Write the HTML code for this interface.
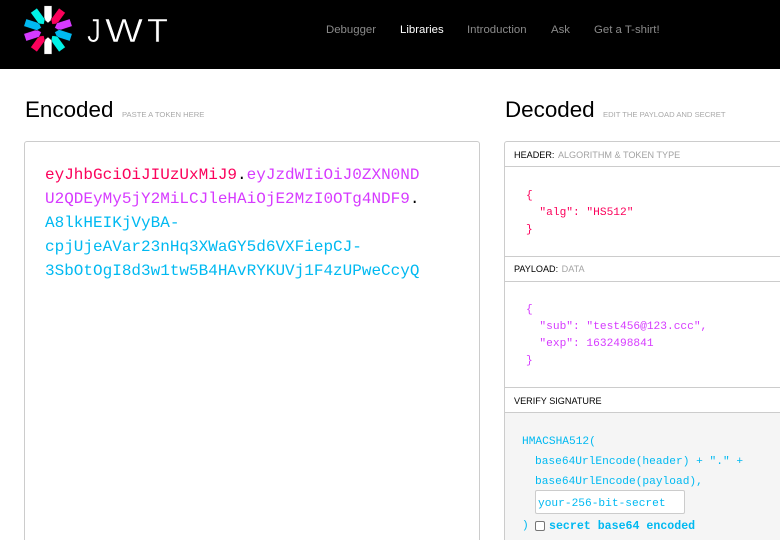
<!DOCTYPE html>
<html lang="en">
<head>
<meta charset="utf-8">
<title>JWT</title>
<style>
html,body{margin:0;padding:0;background:#fff;}
#p{position:relative;width:780px;height:540px;overflow:hidden;background:#fff;font-family:"Liberation Sans",sans-serif;}
#p div,#p a{position:absolute;white-space:pre;}
.nav{top:23px;font-size:11.4px;line-height:14px;color:#8a8a8a;text-decoration:none;}
.h{top:97px;font-size:22.4px;line-height:26px;color:#000;}
.sub{top:110px;font-size:7.65px;line-height:10px;color:#a9a9a9;}
.tok{left:45px;font-size:16px;line-height:24px;font-family:"Liberation Mono",monospace;}
.line{left:505px;width:275px;height:1px;background:#ccc;}
.lab{left:514px;font-size:9.1px;line-height:12px;color:#000;}
.lab span{color:#a3a3a3;margin-left:3.5px;}
.c{font-family:"Liberation Mono",monospace;font-size:11.2px;line-height:17px;}
.pk{color:#fb015b}.pu{color:#d63aff}.bl{color:#00b9f1}
</style>
</head>
<body>
<div id="p">
<div style="left:0;top:0;width:780px;height:69px;background:#000;"></div>
<svg style="position:absolute;left:0;top:0" width="200" height="69" viewBox="0 0 200 69">
<g transform="translate(48 30)" stroke="#000" stroke-width=".4">
<path d="M-3.9-10.5V-24.2H3.9V-10.5L0-7Z" fill="#fff"/>
<path d="M-3.9-10.5V-24.2H3.9V-10.5L0-7Z" fill="#fb015b" transform="rotate(36)"/>
<path d="M-3.9-10.5V-24.2H3.9V-10.5L0-7Z" fill="#d63aff" transform="rotate(72)"/>
<path d="M-3.9-10.5V-24.2H3.9V-10.5L0-7Z" fill="#00b9f1" transform="rotate(108)"/>
<path d="M-3.9-10.5V-24.2H3.9V-10.5L0-7Z" fill="#00f2e6" transform="rotate(144)"/>
<path d="M-3.9-10.5V-24.2H3.9V-10.5L0-7Z" fill="#fff" transform="rotate(180)"/>
<path d="M-3.9-10.5V-24.2H3.9V-10.5L0-7Z" fill="#fb015b" transform="rotate(216)"/>
<path d="M-3.9-10.5V-24.2H3.9V-10.5L0-7Z" fill="#d63aff" transform="rotate(252)"/>
<path d="M-3.9-10.5V-24.2H3.9V-10.5L0-7Z" fill="#00b9f1" transform="rotate(288)"/>
<path d="M-3.9-10.5V-24.2H3.9V-10.5L0-7Z" fill="#00f2e6" transform="rotate(324)"/>
</g>
<g font-family="Liberation Sans" font-size="33" fill="#fff" stroke="#000" stroke-width=".5">
<text x="87" y="42" textLength="14" lengthAdjust="spacingAndGlyphs">J</text>
<text x="105" y="42" textLength="38" lengthAdjust="spacingAndGlyphs">W</text>
<text x="147" y="42" textLength="21" lengthAdjust="spacingAndGlyphs">T</text>
</g>
</svg>
<a class="nav" style="left:326px">Debugger</a>
<a class="nav" style="left:400px;color:#fff">Libraries</a>
<a class="nav" style="left:467px">Introduction</a>
<a class="nav" style="left:551px">Ask</a>
<a class="nav" style="left:594px">Get a T-shirt!</a>

<div class="h" style="left:25px">Encoded</div>
<div class="sub" style="left:122px">PASTE A TOKEN HERE</div>
<div class="h" style="left:505px">Decoded</div>
<div class="sub" style="left:603px">EDIT THE PAYLOAD AND SECRET</div>

<div style="left:24px;top:141px;width:454px;height:420px;border:1px solid #ccc;border-radius:3px;"></div>
<div class="tok" style="top:163px"><span class="pk">eyJhbGciOiJIUzUxMiJ9</span>.<span class="pu">eyJzdWIiOiJ0ZXN0ND</span></div>
<div class="tok pu" style="top:187px">U2QDEyMy5jY2MiLCJleHAiOjE2MzI0OTg4NDF9<span style="color:#000">.</span></div>
<div class="tok bl" style="top:211px">A8lkHEIKjVyBA-</div>
<div class="tok bl" style="top:235px">cpjUjeAVar23nHq3XWaGY5d6VXFiepCJ-</div>
<div class="tok bl" style="top:259px">3SbOtOgI8d3w1tw5B4HAvRYKUVj1F4zUPweCcyQ</div>

<div style="left:504px;top:141px;width:290px;height:420px;border:1px solid #ccc;border-radius:3px;"></div>
<div class="line" style="top:166px"></div>
<div class="line" style="top:256px"></div>
<div class="line" style="top:281px"></div>
<div class="line" style="top:387px"></div>
<div class="line" style="top:412px"></div>
<div style="left:505px;top:413px;width:275px;height:127px;background:#f5f5f5;"></div>

<div class="lab" style="top:149px">HEADER:<span>ALGORITHM &amp; TOKEN TYPE</span></div>
<div class="lab" style="top:263px">PAYLOAD:<span>DATA</span></div>
<div class="lab" style="top:395px">VERIFY SIGNATURE</div>

<div class="c pk" style="left:526px;top:188px">{
  "alg": "HS512"
}</div>
<div class="c pu" style="left:526px;top:302px">{
  "sub": "test456@123.ccc",
  "exp": 1632498841
}</div>

<div class="c bl" style="left:522px;top:434px">HMACSHA512(</div>
<div class="c bl" style="left:535px;top:454px">base64UrlEncode(header) + "." +</div>
<div class="c bl" style="left:535px;top:474px">base64UrlEncode(payload),</div>
<div style="left:535px;top:490px;width:148px;height:22px;background:#fff;border:1px solid #ccc;border-radius:2px;"></div>
<div class="c bl" style="left:538px;top:496px">your-256-bit-secret</div>
<div class="c bl" style="left:522px;top:518px">)</div>
<div style="left:535px;top:521px;width:8px;height:8px;background:#fff;border:1px solid #767676;border-radius:2px;"></div>
<div class="c bl" style="left:549px;top:518px;font-size:11.6px;font-weight:bold">secret base64 encoded</div>
</div>
</body>
</html>
